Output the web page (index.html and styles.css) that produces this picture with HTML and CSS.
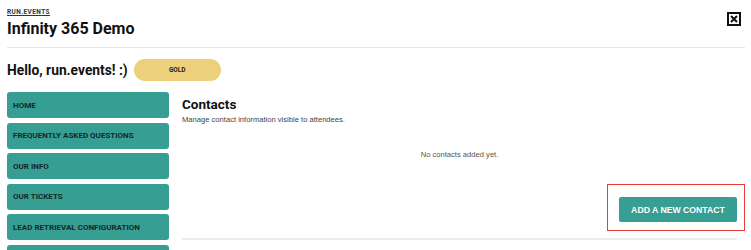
FILE: index.html
```html
<!DOCTYPE html>
<html>
<head>
<meta charset="utf-8">
<link rel="stylesheet" href="styles.css">
</head>
<body>
<div class="page">
  <header class="top">
    <div class="brand">
      <a class="org" href="#">RUN.EVENTS</a>
      <h1 class="title">Infinity 365 Demo</h1>
    </div>
    <button class="close" aria-label="Close">
      <svg width="14" height="14" viewBox="0 0 14 14"><rect x="1" y="1" width="12" height="12" fill="#fff" stroke="#111" stroke-width="2"/><path d="M4 4 L10 10 M10 4 L4 10" stroke="#111" stroke-width="2"/></svg>
    </button>
  </header>
  <div class="rule"></div>
  <div class="hello">
    <h2 class="greet">Hello, run.events! :)</h2>
    <span class="tier">GOLD</span>
  </div>
  <div class="main">
    <nav class="side">
      <a class="nav" href="#">HOME</a>
      <a class="nav" href="#">FREQUENTLY ASKED QUESTIONS</a>
      <a class="nav" href="#">OUR INFO</a>
      <a class="nav" href="#">OUR TICKETS</a>
      <a class="nav" href="#">LEAD RETRIEVAL CONFIGURATION</a>
      <a class="nav" href="#" aria-label="Contacts"></a>
    </nav>
    <section class="content">
      <h3 class="ctitle">Contacts</h3>
      <p class="cdesc">Manage contact information visible to attendees.</p>
      <p class="empty">No contacts added yet.</p>
      <div class="actions">
        <button class="add">ADD A NEW CONTACT</button>
        <span class="mark"></span>
      </div>
      <div class="crule"></div>
    </section>
  </div>
</div>
</body>
</html>
```

FILE: styles.css
```css
* { box-sizing: border-box; }
html, body { margin: 0; padding: 0; background: #fff; }
body { font-family: Roboto, "Liberation Sans", sans-serif; color: #111; overflow: hidden; height: 250px; }
.page { padding: 0 6px 0 7px; }
.top { display: flex; justify-content: space-between; align-items: flex-start; padding-top: 8px; height: 47px; }
.brand { display: flex; flex-direction: column; }
.org { font-size: 6.5px; font-weight: 700; color: #333; text-decoration: underline; letter-spacing: 0.4px; line-height: 8px; }
.title { margin: 0; font-size: 16px; font-weight: 700; line-height: 22px; margin-top: 2px; }
.close { border: 0; background: none; padding: 0; margin: 4px 4px 0 0; display: block; width: 14px; height: 14px; }
.close svg { display: block; }
.rule { height: 1px; background: #e6e6e6; }
.hello { display: flex; align-items: center; gap: 6px; height: 44px; }
.greet { margin: 0; font-size: 13.8px; font-weight: 700; }
.tier { display: inline-flex; align-items: center; justify-content: center; width: 87px; height: 22px; border-radius: 11px; background: #edd07a; font-size: 6.5px; font-weight: 700; color: #222; }
.main { display: grid; grid-template-columns: 162px 555px; column-gap: 13px; }
.side { display: flex; flex-direction: column; gap: 4.5px; }
.nav { display: flex; align-items: center; height: 26px; padding-left: 6px; background: #379e94; border-radius: 3px; color: #142826; font-size: 8px; font-weight: 700; text-decoration: none; }
.content { display: flex; flex-direction: column; }
.ctitle { margin: 3px 0 0; font-size: 13.5px; font-weight: 700; line-height: 18px; }
.cdesc { margin: 2px 0 0; font-family: "Liberation Sans", Arial, sans-serif; font-size: 7.6px; color: #444; }
.empty { margin: 26px 0 0; text-align: center; font-family: "Liberation Sans", Arial, sans-serif; font-size: 7.6px; color: #555; }
.actions { position: relative; display: flex; justify-content: flex-end; margin-top: 38px; }
.add { border: 0; background: #379e94; color: #fff; font-family: "Liberation Sans", Arial, sans-serif; font-weight: 700; font-size: 8.7px; width: 118px; height: 25px; border-radius: 2px; padding: 0; }
.mark { position: absolute; left: 425px; right: -8px; top: -13px; bottom: -9px; border: 1.5px solid #e63c3c; pointer-events: none; }
.crule { height: 2px; background: #ececec; margin-top: 16px; }
```
